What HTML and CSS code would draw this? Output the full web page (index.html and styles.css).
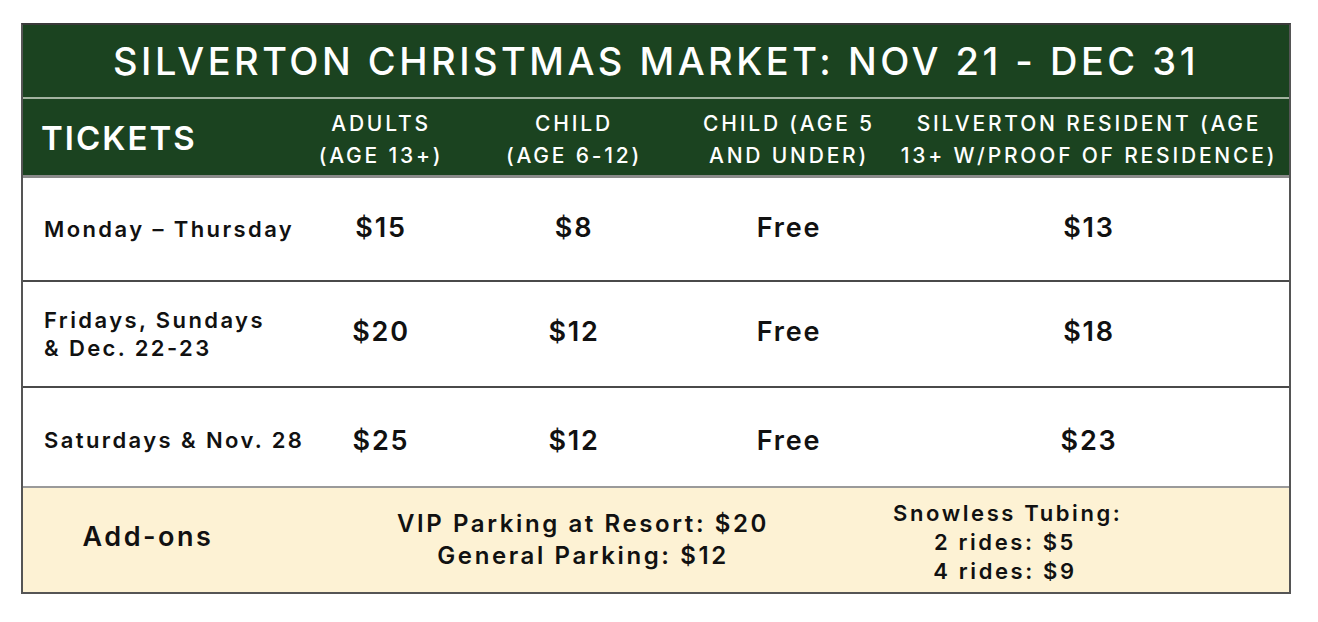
FILE: index.html
```html
<!DOCTYPE html>
<html>
<head>
<meta charset="utf-8">
<link rel="stylesheet" href="styles.css">
</head>
<body>
<div class="sheet">
  <div class="title">SILVERTON CHRISTMAS MARKET: NOV 21 - DEC 31</div>
  <div class="grid head">
    <div class="tickets">TICKETS</div>
    <div class="hcell">ADULTS<br>(AGE 13+)</div>
    <div class="hcell">CHILD<br>(AGE 6-12)</div>
    <div class="hcell">CHILD (AGE 5<br>AND UNDER)</div>
    <div class="hcell">SILVERTON RESIDENT (AGE<br>13+ W/PROOF OF RESIDENCE)</div>
  </div>
  <div class="grid row r1">
    <div class="label">Monday – Thursday</div>
    <div class="price">$15</div>
    <div class="price">$8</div>
    <div class="price">Free</div>
    <div class="price">$13</div>
  </div>
  <div class="grid row r2">
    <div class="label">Fridays, Sundays<br>&amp; Dec. 22-23</div>
    <div class="price">$20</div>
    <div class="price">$12</div>
    <div class="price">Free</div>
    <div class="price">$18</div>
  </div>
  <div class="grid row r3">
    <div class="label">Saturdays &amp; Nov. 28</div>
    <div class="price">$25</div>
    <div class="price">$12</div>
    <div class="price">Free</div>
    <div class="price">$23</div>
  </div>
  <div class="addons">
    <div class="addon-title">Add-ons</div>
    <div class="parking">VIP Parking at Resort: $20<br>General Parking: $12</div>
    <div class="tubing">Snowless Tubing:<br>2 rides: $5<br>4 rides: $9</div>
  </div>
</div>
</body>
</html>
```
FILE: styles.css
```css
html, body {
  margin: 0;
  padding: 0;
  background: #ffffff;
}
body {
  font-family: Inter, "Liberation Sans", sans-serif;
  color: #111111;
}
.sheet {
  margin: 23px 0 0 21px;
  width: 1266px;
  border: 2px solid #555555;
  border-top-color: #3a3a3a;
}
.title {
  background: #1b4320;
  color: #ffffff;
  height: 72px;
  display: flex;
  align-items: center;
  justify-content: center;
  font-size: 38px;
  font-weight: 500;
  letter-spacing: 3.5px;
  border-bottom: 2px solid #a3b3a0;
}
.grid {
  display: grid;
  grid-template-columns: 280px 156px 230px 200px 1fr;
  align-items: center;
}
.head {
  background: #1b4320;
  color: #ffffff;
  height: 70px;
  padding-top: 6px;
  border-bottom: 3px solid #8a8a8a;
}
.tickets {
  padding-left: 18px;
  padding-bottom: 4px;
  font-size: 33px;
  font-weight: 600;
  letter-spacing: 2px;
}
.hcell {
  text-align: center;
  font-size: 21px;
  font-weight: 500;
  line-height: 32px;
  letter-spacing: 2.8px;
  white-space: nowrap;
}
.row {
  background: #ffffff;
  border-bottom: 2px solid #4a4a4a;
}
.r1 { height: 102px; }
.r2 { height: 104px; }
.r3 { height: 92px; padding-top: 6px; border-bottom-color: #9a9a9a; }
.label {
  padding-left: 21px;
  font-size: 22px;
  font-weight: 600;
  line-height: 28px;
  letter-spacing: 2.4px;
  white-space: nowrap;
}
.price {
  text-align: center;
  font-size: 27px;
  font-weight: 600;
  letter-spacing: 1.8px;
}
.r1 .price { padding-bottom: 4px; }
.r2 .price { padding-bottom: 6px; }
.addons {
  background: #fdf2d4;
  height: 104px;
  display: grid;
  grid-template-columns: 250px 620px 224px 1fr;
  align-items: center;
  text-align: center;
  font-weight: 600;
}
.addon-title {
  font-size: 27px;
  letter-spacing: 2.5px;
  padding-bottom: 8px;
}
.parking {
  font-size: 24px;
  line-height: 32px;
  letter-spacing: 2.6px;
}
.tubing {
  font-size: 22px;
  line-height: 29px;
  letter-spacing: 2.6px;
  white-space: nowrap;
  padding-top: 4px;
}
```
